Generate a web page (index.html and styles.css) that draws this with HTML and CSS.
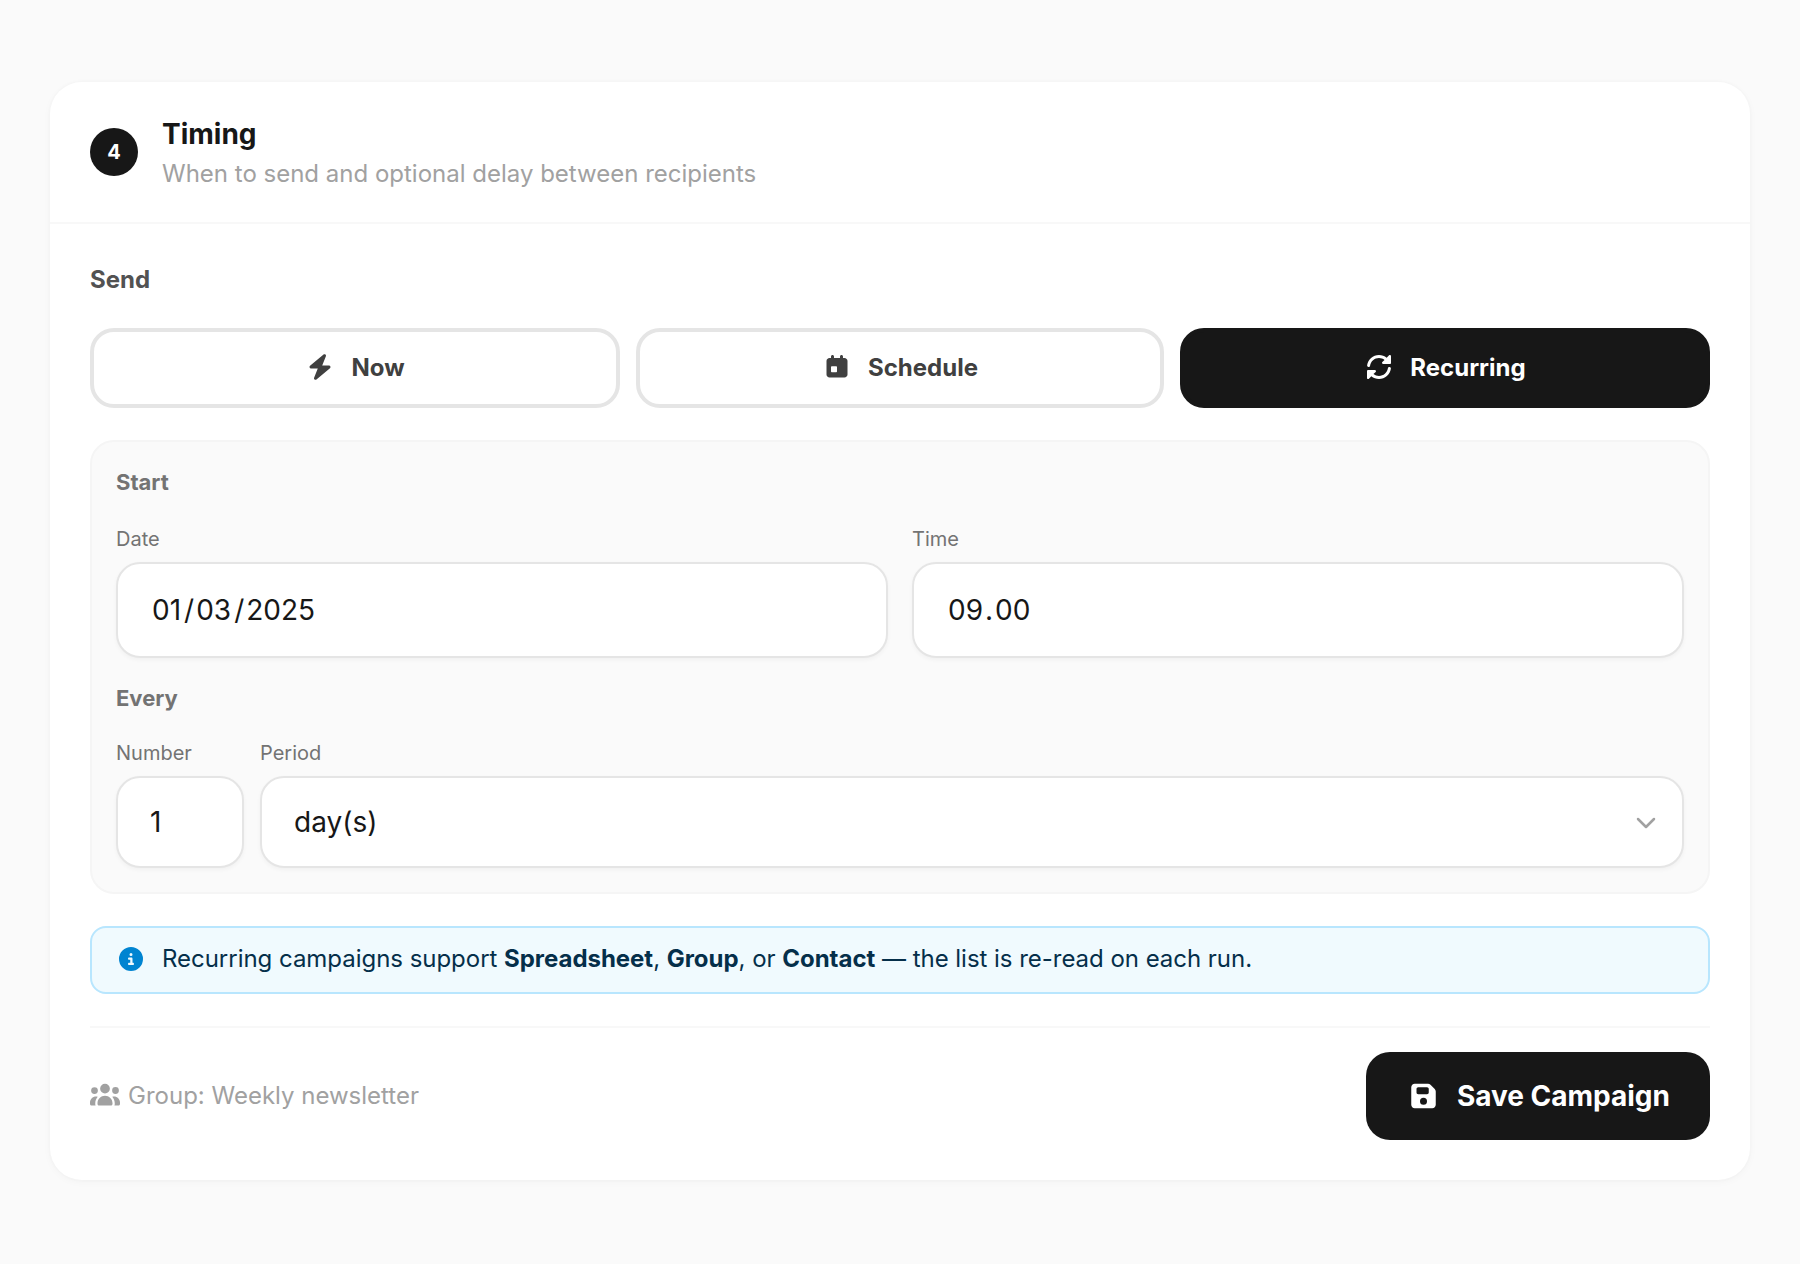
FILE: index.html
```html
<!DOCTYPE html>
<html lang="en">
<head>
  <meta charset="UTF-8" />
  <meta name="viewport" content="width=device-width, initial-scale=1.0"/>
  <title>Campaign Timing</title>
  <link rel="stylesheet" href="styles.css">
</head>
<body>

  <section class="card">
    <header class="card-header">
      <span class="step">4</span>
      <div class="heading">
        <h2>Timing</h2>
        <p>When to send and optional delay between recipients</p>
      </div>
    </header>

    <div class="card-body">
      <div class="section-label">Send</div>

      <div class="send-options">
        <button type="button" class="option">
          <svg class="icon" viewBox="-56 0 560 512"><path d="M338.8-9.9c11.9 8.6 16.3 24.2 10.9 37.8L271.3 224 416 224c13.5 0 25.5 8.4 30.1 21.1s.7 26.9-9.6 35.5l-288 240c-11.3 9.4-27.4 9.9-39.3 1.3s-16.3-24.2-10.9-37.8L176.7 288 32 288c-13.5 0-25.5-8.4-30.1-21.1s-.7-26.9 9.6-35.5l288-240c11.3-9.4 27.4-9.9 39.3-1.3z"/></svg>
          <span>Now</span>
        </button>
        <button type="button" class="option">
          <svg class="icon" viewBox="-96 0 640 512"><path fill-rule="evenodd" d="M128 0c17.7 0 32 14.3 32 32l0 32 128 0 0-32c0-17.7 14.3-32 32-32s32 14.3 32 32l0 32 32 0c35.3 0 64 28.7 64 64l0 288c0 35.3-28.7 64-64 64L64 480c-35.3 0-64-28.7-64-64L0 128C0 92.7 28.7 64 64 64l32 0 0-32c0-17.7 14.3-32 32-32zM112 240c-8.8 0-16 7.2-16 16l0 96c0 8.8 7.2 16 16 16l96 0c8.8 0 16-7.2 16-16l0-96c0-8.8-7.2-16-16-16l-96 0z"/></svg>
          <span>Schedule</span>
        </button>
        <button type="button" class="option active">
          <svg class="icon" viewBox="-64 0 640 512"><path d="M480.1 192l7.9 0c13.3 0 24-10.7 24-24l0-144c0-9.7-5.8-18.5-14.8-22.2S477.9 .2 471 7L419.3 58.8C375 22.1 318 0 256 0 127 0 20.3 95.4 2.6 219.5 .1 237 12.2 253.2 29.7 255.7s33.7-9.7 36.2-27.1C79.2 135.5 159.3 64 256 64 300.4 64 341.2 79 373.7 104.3L327 151c-6.9 6.9-8.9 17.2-5.2 26.2S334.3 192 344 192l136.1 0zM509.4 292.5c2.5-17.5-9.7-33.7-27.1-36.2s-33.7 9.7-36.2 27.1c-13.3 93-93.4 164.5-190.1 164.5-44.4 0-85.2-15-117.7-40.3L185 361c6.9-6.9 8.9-17.2 5.2-26.2S177.7 320 168 320L24 320c-13.3 0-24 10.7-24 24L0 488c0 9.7 5.8 18.5 14.8 22.2S34.1 511.8 41 505l51.8-51.8C137 489.9 194 512 256 512 385 512 491.7 416.6 509.4 292.5z"/></svg>
          <span>Recurring</span>
        </button>
      </div>

      <div class="panel">
        <div class="panel-title">Start</div>
        <div class="start-grid">
          <div class="field">
            <label>Date</label>
            <div class="input date-input"><span>01</span><i>/</i><span>03</span><i>/</i><span>2025</span></div>
          </div>
          <div class="field">
            <label>Time</label>
            <div class="input date-input"><span>09</span><i class="dot">.</i><span>00</span></div>
          </div>
        </div>

        <div class="panel-title every-title">Every</div>
        <div class="every-grid">
          <div class="field">
            <label>Number</label>
            <div class="input">1</div>
          </div>
          <div class="field">
            <label>Period</label>
            <div class="input select">
              <span>day(s)</span>
              <svg class="chevron" viewBox="0 0 20 12"><path d="M2 2l8 8 8-8"/></svg>
            </div>
          </div>
        </div>
      </div>

      <div class="info">
        <svg class="icon" viewBox="-64 0 640 512"><path d="M256 512a256 256 0 1 0 0-512 256 256 0 1 0 0 512zM224 160a32 32 0 1 1 64 0 32 32 0 1 1 -64 0zm-8 64l48 0c13.3 0 24 10.7 24 24l0 88 8 0c13.3 0 24 10.7 24 24s-10.7 24-24 24l-80 0c-13.3 0-24-10.7-24-24s10.7-24 24-24l24 0 0-64-24 0c-13.3 0-24-10.7-24-24s10.7-24 24-24z"/></svg>
        <p>Recurring campaigns support <strong>Spreadsheet</strong>, <strong>Group</strong>, or <strong>Contact</strong> — the list is re-read on each run.</p>
      </div>

      <footer class="card-footer">
        <div class="audience">
          <svg class="icon" viewBox="0 0 640 512"><path d="M320 16a104 104 0 1 1 0 208 104 104 0 1 1 0-208zM96 88a72 72 0 1 1 0 144 72 72 0 1 1 0-144zM0 416c0-70.7 57.3-128 128-128 12.8 0 25.2 1.9 36.9 5.4-32.9 36.8-52.9 85.4-52.9 138.6l0 16c0 11.4 2.4 22.2 6.7 32L32 480c-17.7 0-32-14.3-32-32l0-32zm521.3 64c4.3-9.8 6.7-20.6 6.7-32l0-16c0-53.2-20-101.8-52.9-138.6 11.7-3.5 24.1-5.4 36.9-5.4 70.7 0 128 57.3 128 128l0 32c0 17.7-14.3 32-32 32l-86.7 0zM472 160a72 72 0 1 1 144 0 72 72 0 1 1 -144 0zM160 432c0-88.4 71.6-160 160-160s160 71.6 160 160l0 16c0 17.7-14.3 32-32 32l-256 0c-17.7 0-32-14.3-32-32l0-16z"/></svg>
          <span>Group: Weekly newsletter</span>
        </div>
        <button type="button" class="save-btn">
          <svg class="icon" viewBox="-96 0 640 512"><path fill-rule="evenodd" d="M64 32C28.7 32 0 60.7 0 96L0 416c0 35.3 28.7 64 64 64l320 0c35.3 0 64-28.7 64-64l0-242.7c0-17-6.7-33.3-18.7-45.3L352 50.7C340 38.7 323.7 32 306.7 32L64 32zm32 96c0-17.7 14.3-32 32-32l160 0c17.7 0 32 14.3 32 32l0 64c0 17.7-14.3 32-32 32l-160 0c-17.7 0-32-14.3-32-32l0-64zM224 288a64 64 0 1 1 0 128 64 64 0 1 1 0-128z"/></svg>
          <span>Save Campaign</span>
        </button>
      </footer>
    </div>
  </section>

</body>
</html>
```
FILE: styles.css
```css
* {
  box-sizing: border-box;
}

body {
  margin: 0;
  padding: 82px 50px;
  font-family: Inter, sans-serif;
  font-size: 24px;
  line-height: 32px;
  background-color: #fafafa;
  color: #171717;
}

h2,
p {
  margin: 0;
}

button {
  font-family: inherit;
  cursor: pointer;
}

.icon {
  width: 30px;
  height: 24px;
  fill: currentColor;
  overflow: visible;
  flex-shrink: 0;
}

.card {
  height: 1098px;
  background-color: #fff;
  border-radius: 32px;
  box-shadow: 0 0 0 2px rgba(0,0,0,0.008), 0 2px 8px rgba(0,0,0,0.03);
}

.card-header {
  display: flex;
  align-items: center;
  gap: 24px;
  height: 142px;
  padding: 0 40px;
  border-bottom: 2px solid #f8f8f8;
}

.step {
  display: flex;
  align-items: center;
  justify-content: center;
  width: 48px;
  height: 48px;
  border-radius: 50%;
  background-color: #171717;
  color: #fff;
  font-size: 20px;
  font-weight: 700;
}

.heading {
  padding-top: 2px;
}

.card-header h2 {
  font-size: 28px;
  font-weight: 650;
  line-height: 40px;
}

.card-header p {
  color: #a1a1a1;
  line-height: 36px;
  margin-top: 2px;
}

.card-body {
  padding: 40px;
}

.section-label {
  font-weight: 650;
  color: #525252;
}

.send-options {
  display: grid;
  grid-template-columns: 530fr 528fr 530fr;
  gap: 16px;
  margin-top: 32px;
}

.option {
  display: flex;
  align-items: center;
  justify-content: center;
  gap: 16px;
  height: 80px;
  padding: 0 0 2px;
  border: 4px solid #e5e5e5;
  border-radius: 24px;
  background-color: #fff;
  color: #404040;
  font-size: 24px;
  font-weight: 650;
}

.option.active {
  border-color: #171717;
  background-color: #171717;
  color: #fff;
}

.panel {
  height: 454px;
  margin-top: 32px;
  padding: 24px;
  border: 2px solid #f5f5f5;
  border-radius: 24px;
  background-color: #fafafa;
}

.panel-title {
  font-size: 22px;
  font-weight: 650;
  color: #737373;
}

.start-grid,
.every-grid {
  display: grid;
  grid-template-columns: 1fr 1fr;
  gap: 24px;
  margin-top: 26px;
}

.every-grid {
  grid-template-columns: 128px 1fr;
  gap: 16px;
  margin-top: 24px;
}

.field label {
  display: block;
  margin-bottom: 8px;
  font-size: 20px;
  line-height: 30px;
  color: #737373;
}

.input {
  display: flex;
  align-items: center;
  height: 92px;
  padding: 0 32px;
  border: 2px solid #e5e5e5;
  border-radius: 24px;
  background-color: #fff;
  box-shadow: 0 2px 4px rgba(0,0,0,0.04);
  font-size: 28px;
}

.date-input {
  height: 96px;
  padding: 0 34px;
}

.date-input i {
  font-style: normal;
  padding: 0 2px 0 3px;
}

.date-input .dot {
  padding: 0 2px;
}

.every-title {
  margin-top: 24px;
}

.select {
  justify-content: space-between;
  padding-right: 26px;
}

.chevron {
  width: 20px;
  height: 12px;
  margin-top: 2px;
  fill: none;
  stroke: #a1a1a1;
  stroke-width: 2.5;
  stroke-linecap: round;
  stroke-linejoin: round;
}

.info {
  display: flex;
  align-items: center;
  gap: 16px;
  height: 68px;
  margin-top: 32px;
  padding: 0 24px 2px;
  border: 2px solid #b8e6fe;
  border-radius: 16px;
  background-color: #f0fafe;
  color: #052f4a;
  letter-spacing: -0.03px;
}

.info .icon {
  color: #0084d1;
}

.info strong {
  font-weight: 650;
}

.card-footer {
  display: flex;
  align-items: center;
  justify-content: space-between;
  margin-top: 32px;
  padding-top: 24px;
  border-top: 2px solid #f8f8f8;
}

.audience {
  display: flex;
  align-items: center;
  gap: 8px;
  color: #a1a1a1;
}

.audience .icon {
  margin-top: -2px;
}

.save-btn {
  display: flex;
  align-items: center;
  gap: 16px;
  height: 88px;
  padding: 0 40px;
  border: none;
  border-radius: 24px;
  background-color: #171717;
  color: #fff;
  font-size: 28px;
  font-weight: 650;
}

.save-btn .icon {
  width: 35px;
  height: 28px;
}
```
